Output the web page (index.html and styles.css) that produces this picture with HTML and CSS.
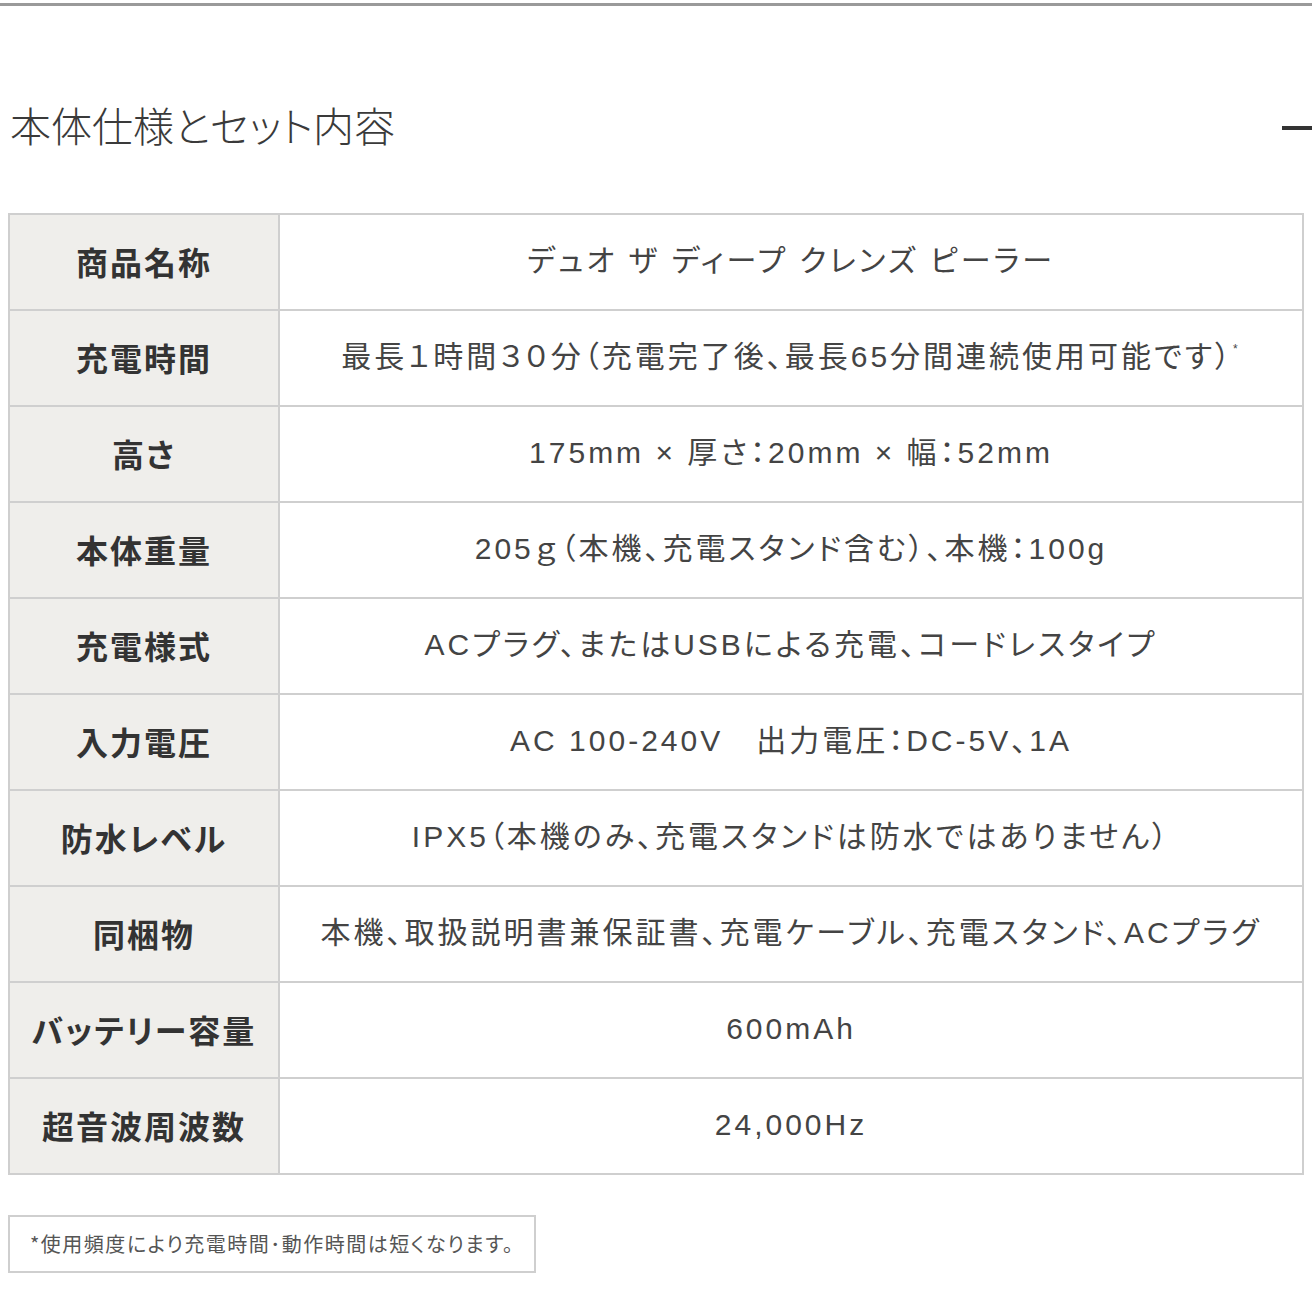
FILE: index.html
```html
<!DOCTYPE html>
<html lang="ja">
<head>
<meta charset="utf-8">
<link rel="stylesheet" href="styles.css">
</head>
<body>
<div class="topline"></div>
<div class="head">
  <h2 class="title">本体仕様とセット内容</h2>
  <span class="dash"></span>
</div>
<table class="spec">
  <tr><th>商品名称</th><td>デュオ ザ ディープ クレンズ ピーラー</td></tr>
  <tr><th>充電時間</th><td>最長１時間３０分（充電完了後、最長65分間連続使用可能です）<sup>*</sup></td></tr>
  <tr><th>高さ</th><td>175mm × 厚さ：20mm × 幅：52mm</td></tr>
  <tr><th>本体重量</th><td>205ｇ（本機、充電スタンド含む）、本機：100g</td></tr>
  <tr><th>充電様式</th><td>ACプラグ、またはUSBによる充電、コードレスタイプ</td></tr>
  <tr><th>入力電圧</th><td>AC 100-240V　出力電圧：DC-5V、1A</td></tr>
  <tr><th>防水レベル</th><td>IPX5（本機のみ、充電スタンドは防水ではありません）</td></tr>
  <tr><th>同梱物</th><td>本機、取扱説明書兼保証書、充電ケーブル、充電スタンド、ACプラグ</td></tr>
  <tr><th>バッテリー容量</th><td>600mAh</td></tr>
  <tr><th>超音波周波数</th><td>24,000Hz</td></tr>
</table>
<div class="note">*使用頻度により充電時間･動作時間は短くなります。</div>
</body>
</html>
```
FILE: styles.css
```css
html, body {
  margin: 0;
  padding: 0;
  background: #fff;
}
body {
  font-family: "Noto Sans CJK JP", "Noto Sans", sans-serif;
  color: #444;
  padding: 0 8px;
}
.topline {
  height: 3px;
  background: #9a9a9a;
  margin: 3px -8px 0;
}
.head {
  display: flex;
  align-items: center;
  justify-content: space-between;
  height: 210px;
  margin-top: -3px;
  margin-right: -8px;
  padding-bottom: 8px;
  box-sizing: border-box;
}
.title {
  margin: 0 0 0 2px;
  font-size: 41px;
  font-weight: 300;
  color: #3a3a3a;
  letter-spacing: 0;
  font-feature-settings: "palt";
  line-height: 1;
  padding-top: 40px;
}
.dash {
  width: 30px;
  height: 4px;
  background: #333;
  margin-top: 48px;
}
.spec {
  width: 100%;
  border-collapse: collapse;
  border: 2px solid #cfcfcf;
}
.spec th, .spec td {
  border: 2px solid #cfcfcf;
  height: 92px;
  padding: 0 0 2px;
  text-align: center;
  vertical-align: middle;
  line-height: 1;
}
.spec th {
  width: 268px;
  background: #efeeeb;
  font-size: 32px;
  font-weight: 700;
  color: #333;
  letter-spacing: 2px;
  font-feature-settings: "palt";
}
.spec td {
  font-family: "Liberation Sans", "Noto Sans CJK JP", sans-serif;
  font-size: 30px;
  font-weight: 400;
  color: #444;
  letter-spacing: 3px;
  font-feature-settings: "palt";
}
.spec sup {
  font-size: 12px;
  vertical-align: 14px;
}
.note {
  display: inline-block;
  margin-top: 40px;
  border: 2px solid #cfcfcf;
  padding: 17px 20px 17px 20px;
  font-size: 20px;
  color: #555;
  line-height: 1;
  letter-spacing: 1.5px;
  font-feature-settings: "palt";
}
```
